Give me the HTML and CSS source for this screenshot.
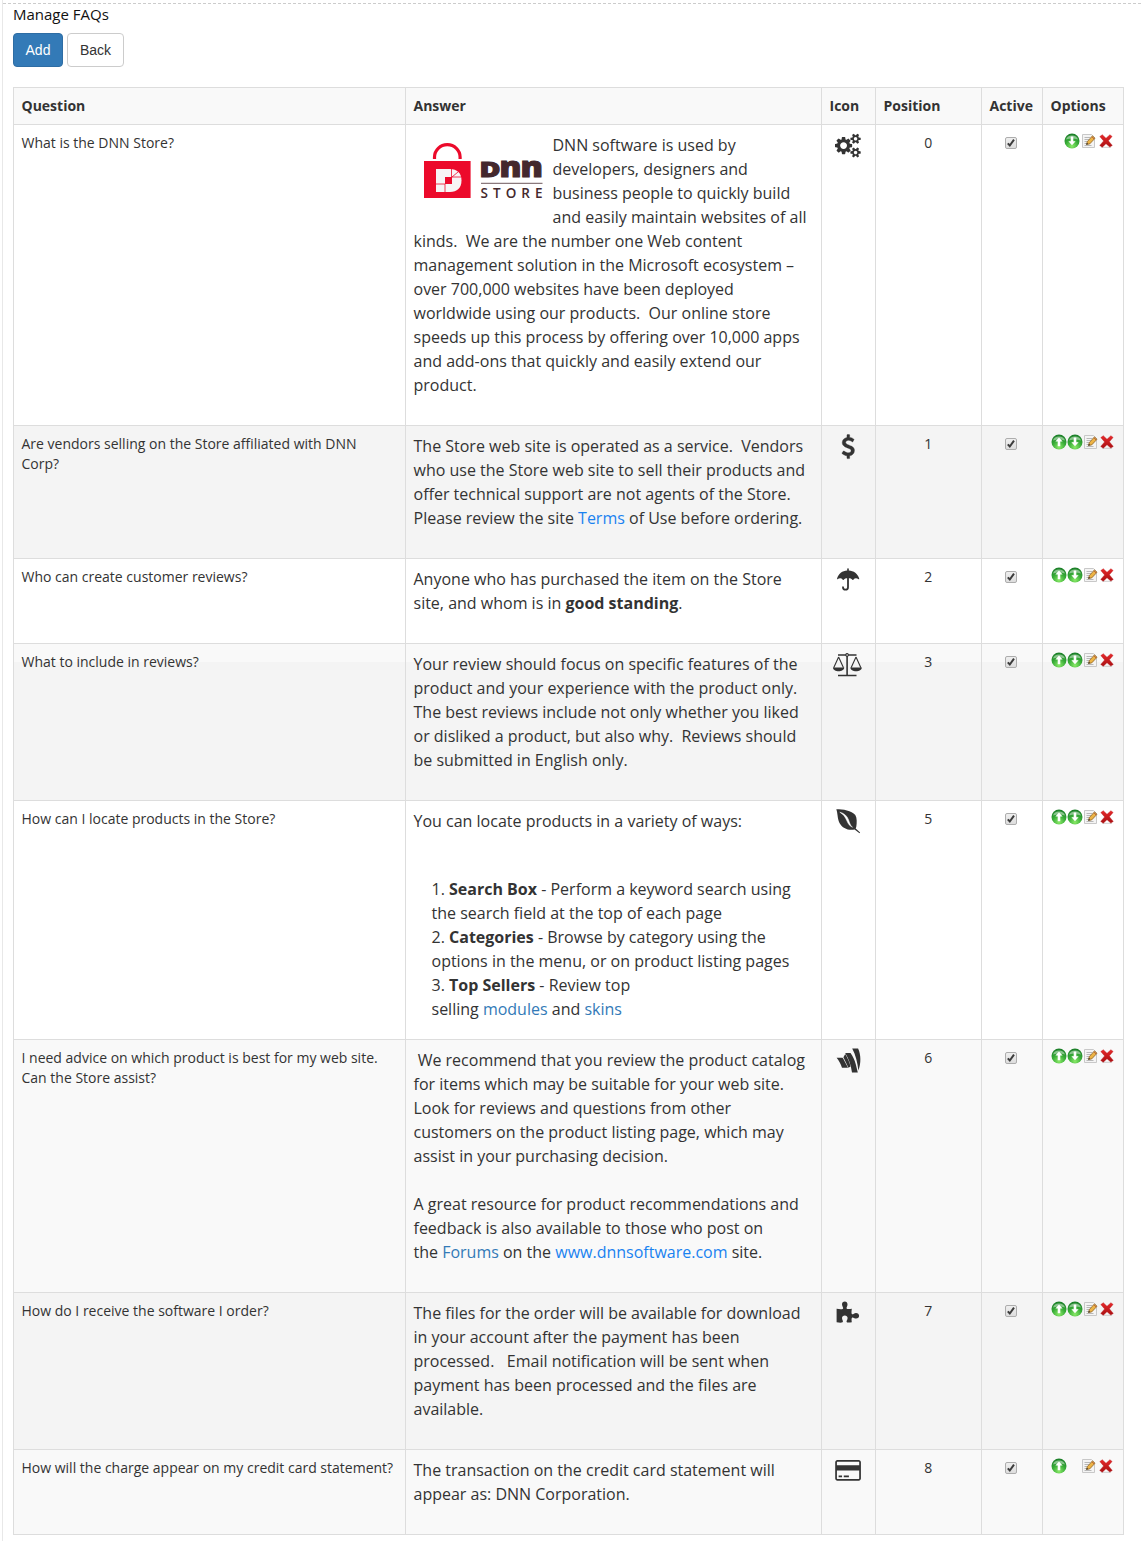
FILE: index.html
```html
<!DOCTYPE html>
<html lang="en">
<head>
<meta charset="utf-8">
<title>Manage FAQs</title>
<link rel="stylesheet" href="styles.css">
</head>
<body>
<svg class="defs" aria-hidden="true">
  <defs>
    <radialGradient id="green" cx=".5" cy=".85" r=".8"><stop offset="0" stop-color="#8aea68"/><stop offset=".55" stop-color="#37ab37"/><stop offset="1" stop-color="#1c8029"/></radialGradient>
    <linearGradient id="red" x1="0" y1="0" x2="0" y2="1"><stop offset="0" stop-color="#e8292b"/><stop offset="1" stop-color="#a80f12"/></linearGradient>
    <linearGradient id="box" x1="0" y1="0" x2="0" y2="1"><stop offset="0" stop-color="#f0f0f0"/><stop offset="1" stop-color="#dcdcdc"/></linearGradient>
    <symbol id="up" viewBox="0 0 16 16"><circle cx="8" cy="8" r="7.500" fill="url(#green)"/><path d="M2 6.500a6.200 5.500 0 0 1 12 0Q8 4.600 2 6.500z" fill="#fff" opacity=".45"/><path d="M8 3.600l3.600 4H9.300v4.700H6.700V7.600H4.400z" fill="#fff"/></symbol>
    <symbol id="down" viewBox="0 0 16 16"><circle cx="8" cy="8" r="7.500" fill="url(#green)"/><path d="M2 6.500a6.200 5.500 0 0 1 12 0Q8 4.600 2 6.500z" fill="#fff" opacity=".45"/><path d="M8 12.300l3.600-4H9.300V3.600H6.700v4.700H4.400z" fill="#fff"/></symbol>
    <symbol id="edit" viewBox="0 0 16 16"><path d="M1.500 1.500h9l3 3v10h-12z" fill="#f4f4f4" stroke="#c8c8c8"/><path d="M3.500 4.500h6M3.500 6.500h5M3.500 8.500h4M3.500 10.500h2.500M3.500 12.500h7" stroke="#b8b8b8"/><path d="M5.500 11.500L6.400 8.500 11.500 2.900 14 5.300 8.700 10.900z" fill="#edb445" stroke="#8e6326" stroke-width=".8"/><path d="M11 3.800l2.200 2.200" stroke="#b95a35"/><path d="M5.200 11.800l.7-2 1.300 1.300z" fill="#333"/></symbol>
    <symbol id="delete" viewBox="0 0 16 16"><path d="M3 14.300h10" stroke="#bbb" opacity=".7"/><path d="M1.800 3.600L4.300 1.700 8 5.300 11.900 1.700l2.200 1.700L10.400 7.800l3.900 4.600-2.500 1.700L8 10.700l-3.700 3.500-2.600-1.800L5.600 7.900z" fill="url(#red)" stroke="#b51c1f" stroke-width=".4"/></symbol>
    <symbol id="check" viewBox="0 0 12 12"><rect x=".5" y=".5" width="11" height="11" rx="1.500" fill="url(#box)" stroke="#adadad"/><path d="M2.800 6.300l2 2.200 4.200-5.800" fill="none" stroke="#3c3c3c" stroke-width="2"/></symbol>
  </defs>
</svg>
<main class="module">
  <h1 class="title">Manage FAQs</h1>
  <div class="actions"><button class="btn btn-primary">Add</button><button class="btn btn-back">Back</button></div>
  <table class="faq">
    <colgroup><col class="c-question"><col class="c-answer"><col class="c-icon"><col class="c-position"><col class="c-active"><col class="c-options"></colgroup>
    <thead><tr><th>Question</th><th>Answer</th><th>Icon</th><th>Position</th><th>Active</th><th>Options</th></tr></thead>
    <tbody>
      <tr>
        <td>What is the DNN Store?</td>
        <td class="answer">
          <svg class="logo" viewBox="0 0 119 56">
            <path d="M10.500 16v-2a12.800 12.300 0 0 1 25.600 0v2" fill="none" stroke="#ec0a2b" stroke-width="3.200"/>
            <rect x="0" y="18" width="46.600" height="37" fill="#ec0a2b"/>
            <path d="M12 26h14c7 0 11.500 4 11.500 11.500S33 49 26 49H12z" fill="#f7f4f5"/>
            <path d="M21 34h7v7h-7z" fill="#ec0a2b"/><path d="M27.500 26v8M28 34h9M28 34l6-5M21 41v8M12 41h9" stroke="#ec0a2b" stroke-width=".8" fill="none"/>
            <g class="wordmark"><text x="55.500" y="34" font-size="21.500" textLength="21" lengthAdjust="spacingAndGlyphs">D</text><text x="75.500" y="34" font-size="28" textLength="22" lengthAdjust="spacingAndGlyphs">n</text><text x="96.500" y="34" font-size="28" textLength="22.500" lengthAdjust="spacingAndGlyphs">n</text></g>
            <path d="M57 40.300h61.500" stroke="#6d585c"/>
            <text class="store" x="56.500" y="54.500" textLength="62" lengthAdjust="spacing">STORE</text>
          </svg>DNN software is used by<br>developers, designers and<br>business people to quickly build<br>and easily maintain websites of all<br>kinds.&nbsp; We are the number one Web content<br>management solution in the Microsoft ecosystem –<br>over 700,000 websites have been deployed<br>worldwide using our products.&nbsp; Our online store<br>speeds up this process by offering over 10,000 apps<br>and add-ons that quickly and easily extend our<br>product.</td>
        <td><svg class="icon" viewBox="0 0 30 26"><path transform="translate(2 .6) scale(.01339)" d="M896 896q0-106-75-181t-181-75-181 75-75 181 75 181 181 75 181-75 75-181zm768 512q0-52-38-90t-90-38-90 38-38 90q0 53 37.500 90.500t90.500 37.500 90.500-37.500 37.500-90.500zm0-1024q0-52-38-90t-90-38-90 38-38 90q0 53 37.500 90.500t90.500 37.500 90.500-37.500 37.500-90.500zm-384 421v185q0 10-7 19.500t-16 10.500l-155 24q-11 35-32 76 34 48 90 115 7 11 7 20 0 12-7 19-23 30-82.500 89.500t-78.500 59.500q-11 0-21-7l-115-90q-37 19-77 31-11 108-23 155-7 24-30 24h-186q-11 0-20-7.500t-10-17.500l-23-153q-34-10-75-31l-118 89q-7 7-20 7-11 0-21-8-144-133-144-160 0-9 7-19 10-14 41-53t47-61q-23-44-35-82l-152-24q-10-1-17-9.500t-7-19.500v-185q0-10 7-19.500t16-10.500l155-24q11-35 32-76-34-48-90-115-7-11-7-20 0-12 7-20 22-30 82-89t79-59q11 0 21 7l115 90q34-18 77-32 11-108 23-154 7-24 30-24h186q11 0 20 7.500t10 17.500l23 153q34 10 75 31l118-89q8-7 20-7 11 0 21 8 144 133 144 160 0 8-7 19-12 16-42 54t-45 60q23 48 34 82l152 23q10 2 17 10.500t7 19.500zm640 533v140q0 16-149 31-12 27-30 52 51 113 51 138 0 4-4 7-122 71-124 71-8 0-46-47t-52-68q-20 2-30 2t-30-2q-14 21-52 68t-46 47q-2 0-124-71-4-3-4-7 0-25 51-138-18-25-30-52-149-15-149-31v-140q0-16 149-31 13-29 30-52-51-113-51-138 0-4 4-7 4-2 35-20t59-34 30-16q8 0 46 46.500t52 67.500q20-2 30-2t30 2q51-71 92-112l6-2q4 0 124 70 4 3 4 7 0 25-51 138 17 23 30 52 149 15 149 31zm0-1024v140q0 16-149 31-12 27-30 52 51 113 51 138 0 4-4 7-122 71-124 71-8 0-46-47t-52-68q-20 2-30 2t-30-2q-14 21-52 68t-46 47q-2 0-124-71-4-3-4-7 0-25 51-138-18-25-30-52-149-15-149-31v-140q0-16 149-31 13-29 30-52-51-113-51-138 0-4 4-7 4-2 35-20t59-34 30-16q8 0 46 46.500t52 67.500q20-2 30-2t30 2q51-71 92-112l6-2q4 0 124 70 4 3 4 7 0 25-51 138 17 23 30 52 149 15 149 31z"/></svg></td>
        <td class="position">0</td><td><svg class="check"><use href="#check"/></svg></td>
        <td><div class="options no-up"><svg><use href="#down"/></svg><svg><use href="#edit"/></svg><svg><use href="#delete"/></svg></div></td>
      </tr>
      <tr class="dark">
        <td>Are vendors selling on the Store affiliated with DNN<br>Corp?</td>
        <td class="answer">The Store web site is operated as a service.&nbsp; Vendors<br>who use the Store web site to sell their products and<br>offer technical support are not agents of the Store.<br>Please review the site <a class="bright">Terms</a> of Use before ordering.</td>
        <td><svg class="icon" viewBox="0 0 30 26"><path stroke="#333" stroke-width="30" transform="translate(3.200 .6) scale(.01339)" d="M1362 1185q0 153-99.500 263.500t-258.500 136.500v175q0 14-9 23t-23 9h-135q-13 0-22.500-9.500t-9.500-22.500v-175q-66-9-127.500-31t-101.500-44.500-74-48-46.500-37.500-17.500-18q-17-21-2-41l103-135q7-10 23-12 15-2 24 9l2 2q113 99 243 125 37 8 74 8 81 0 142.500-43t61.500-122q0-28-15-53t-33.500-42-58.500-37.500-66-32-80-32.500q-39-16-61.500-25t-61.500-26.500-62.500-31-56.500-35.500-53.500-42.500-43.500-49-35.500-58-21-66.500-8.500-78q0-138 98-242t255-134v-180q0-13 9.500-22.500t22.500-9.500h135q14 0 23 9t9 23v176q57 6 110.500 23t87 33.500 63.500 37.500 39 29 15 14q17 18 5 38l-81 146q-8 15-23 16-14 3-27-7-3-3-14.500-12t-39-26.500-58.500-32-74.500-26-85.500-11.500q-95 0-155 43t-60 111q0 26 8.500 48t29.500 41.500 39.500 33 56 31 60.500 27 70 27.500q53 20 81 31.500t76 35 75.500 42.500 62 50 53 63.500 31.500 76.500 13 94z"/></svg></td>
        <td class="position">1</td><td><svg class="check"><use href="#check"/></svg></td>
        <td><div class="options"><svg><use href="#up"/></svg><svg><use href="#down"/></svg><svg><use href="#edit"/></svg><svg><use href="#delete"/></svg></div></td>
      </tr>
      <tr>
        <td>Who can create customer reviews?</td>
        <td class="answer">Anyone who has purchased the item on the Store<br>site, and whom is in <b>good standing</b>.</td>
        <td><svg class="icon" viewBox="0 0 30 26"><path d="M4 12C5.200 6.800 9.500 3.800 14.200 3.600V2.100a.8.800 0 0 1 1.600 0v1.500c4.700.2 9.200 3.200 10.500 8.400-.3.300-.7.200-1 0-1.900-1.200-3.600-1-5 .7-.3.300-.6.300-.9 0-1.100-1.200-2.200-1.500-3.500-1.500v9a2.900 2.900 0 0 1-6.800 0c0-1.200 1.700-1.200 1.800 0a1.600 1.600 0 0 0 3.200 0v-9c-1.300 0-2.300.3-3.400 1.500-.3.300-.6.300-.9 0-1.400-1.700-3.100-1.900-5-.7-.4.200-.7.300-.9 0z"/></svg></td>
        <td class="position">2</td><td><svg class="check"><use href="#check"/></svg></td>
        <td><div class="options"><svg><use href="#up"/></svg><svg><use href="#down"/></svg><svg><use href="#edit"/></svg><svg><use href="#delete"/></svg></div></td>
      </tr>
      <tr class="split">
        <td>What to include in reviews?</td>
        <td class="answer">Your review should focus on specific features of the<br>product and your experience with the product only.<br>The best reviews include not only whether you liked<br>or disliked a product, but also why.&nbsp; Reviews should<br>be submitted in English only.</td>
        <td><svg class="icon" viewBox="0 0 30 26"><path d="M5 2.200h7.300a1.900 1.900 0 0 1 3.500 0H23.500v1.500h-7.700L14.900 4.700v18h8.600v1.500H5v-1.500h8.300v-18l-1-1H5z"/><circle cx="14.100" cy="3" r=".8" fill="#f9f9f9"/><path d="M5.600 5L.7 15.800M5.600 5l4.900 10.800M23 5l-4.900 10.800M23 5l4.900 10.800" stroke="#333" stroke-width="1.100"/><path d="M0 15.500h11.200c0 5-11.200 5-11.200 0zM17.400 15.500h11.400c0 5-11.400 5-11.400 0z"/></svg></td>
        <td class="position">3</td><td><svg class="check"><use href="#check"/></svg></td>
        <td><div class="options"><svg><use href="#up"/></svg><svg><use href="#down"/></svg><svg><use href="#edit"/></svg><svg><use href="#delete"/></svg></div></td>
      </tr>
      <tr>
        <td>How can I locate products in the Store?</td>
        <td class="answer"><p class="intro">You can locate products in a variety of ways:</p>
          <div class="ways">1. <b>Search Box</b> - Perform a keyword search using<br>the search field at the top of each page<br>2. <b>Categories</b> - Browse by category using the<br>options in the menu, or on product listing pages<br>3. <b>Top Sellers</b> - Review top<br>selling <a>modules</a> and <a>skins</a></div></td>
        <td><svg class="icon" viewBox="0 0 30 26"><path d="M3.300.2C10 .2 18.500 1.300 22.300 6c1.800 3.200 1.600 7.600 1 11.800l-.6 1.600 4.400 4.200-.6.700-4.900-3.800C15.500 21.800 9.500 19.500 6.500 14 4.400 9.500 4.700 3.800 3.300.2z"/><path d="M6.800 3.200C11 4.200 14.300 7 15.600 11c1 3 1.900 5.700 3.900 7.300-2.900-1.300-4.400-3.500-5.600-6.500C12.300 7.900 10.300 5.200 6.800 3.200z" fill="#fff" stroke="#fff" stroke-width=".5"/></svg></td>
        <td class="position">5</td><td><svg class="check"><use href="#check"/></svg></td>
        <td><div class="options"><svg><use href="#up"/></svg><svg><use href="#down"/></svg><svg><use href="#edit"/></svg><svg><use href="#delete"/></svg></div></td>
      </tr>
      <tr class="light">
        <td>I need advice on which product is best for my web site.<br>Can the Store assist?</td>
        <td class="answer">&nbsp;We recommend that you review the product catalog<br>for items which may be suitable for your web site.<br>Look for reviews and questions from other<br>customers on the product listing page, which may<br>assist in your purchasing decision.<br><br>A great resource for product recommendations and<br>feedback is also available to those who post on<br>the <a>Forums</a> on the <a class="bright">www.dnnsoftware.com</a> site.</td>
        <td><svg class="icon" viewBox="0 0 30 26"><path d="M3.600 9.700h5.200c.8 0 1.200.4 1.500 1.100l4.700 9H9c-1.200-3.700-3-7.200-5.400-10.100z"/><path d="M12.200 5h5.300c2.300 3 4.200 7 5.200 11l2.100 8.500h-5.800C18 17.500 15.800 10.500 12.200 5z"/><path d="M19.200.4h5.900c3 6.800 3 14.600.3 22.100C24.500 14.500 22.700 7 19.200.4z"/><path d="M10.400 9.200l1.900-3.100c2.300 3.800 4.100 7.900 5.200 12.400l-2.100 1.300z"/></svg></td>
        <td class="position">6</td><td><svg class="check"><use href="#check"/></svg></td>
        <td><div class="options"><svg><use href="#up"/></svg><svg><use href="#down"/></svg><svg><use href="#edit"/></svg><svg><use href="#delete"/></svg></div></td>
      </tr>
      <tr class="dark">
        <td>How do I receive the software I order?</td>
        <td class="answer">The files for the order will be available for download<br>in your account after the payment has been<br>processed.&nbsp;&nbsp; Email notification will be sent when<br>payment has been processed and the files are<br>available.</td>
        <td><svg class="icon" viewBox="0 0 30 26"><path d="M3.600 7.800c2.600.4 5.300.8 6.400-.1.800-.8-1-2.300-1-4.200C9 1.500 10.200.6 11.800.6s2.700 1.100 2.700 2.900c0 1.800-1.300 3-.9 3.900.6 1.200 3.300.5 5.200.3-.2 2.100-.7 5 .3 5.600 1 .4 1.900-1.300 3.900-1.300 1.800 0 3.100 1.100 3.100 2.800s-1.200 2.800-3 2.800c-1.900 0-2.900-1.500-3.800-1.100-1.100.5-.7 2.900-.5 4.700-1.900.2-4.600.8-5.200-.3-.4-.9 1-2 1-3.800 0-1.700-1.200-2.700-2.800-2.700s-2.800 1-2.800 2.700c0 1.800 1.400 3 .8 3.900-.8 1-3.600.7-6.200.2z"/></svg></td>
        <td class="position">7</td><td><svg class="check"><use href="#check"/></svg></td>
        <td><div class="options"><svg><use href="#up"/></svg><svg><use href="#down"/></svg><svg><use href="#edit"/></svg><svg><use href="#delete"/></svg></div></td>
      </tr>
      <tr class="light">
        <td>How will the charge appear on my credit card statement?</td>
        <td class="answer">The transaction on the credit card statement will<br>appear as: DNN Corporation.</td>
        <td><svg class="icon" viewBox="0 0 30 26"><path transform="translate(2.200 .4) scale(.01339)" d="M1760 128q66 0 113 47t47 113v1216q0 66-47 113t-113 47h-1600q-66 0-113-47t-47-113v-1216q0-66 47-113t113-47h1600zm-1600 128q-13 0-22.500 9.500t-9.500 22.500v224h1664v-224q0-13-9.500-22.500t-22.500-9.500h-1600zm1600 1280q13 0 22.500-9.500t9.500-22.500v-608h-1664v608q0 13 9.500 22.500t22.500 9.500h1600zm-1504-128v-128h256v128h-256zm384 0v-128h384v128h-384z"/></svg></td>
        <td class="position">8</td><td><svg class="check"><use href="#check"/></svg></td>
        <td><div class="options no-down"><svg><use href="#up"/></svg><svg><use href="#edit"/></svg><svg><use href="#delete"/></svg></div></td>
      </tr>
    </tbody>
  </table>
</main>
</body>
</html>
```
FILE: styles.css
```css
* { box-sizing: border-box; }
html { background: #fff; }
body { margin: 0 0 0 2px; height: 1541px; border-left: 1px solid #e8e8e8; padding-top: 3px; overflow: hidden; font: 14px/20px "Open Sans", sans-serif; color: #333; }
.defs { display: block; width: 0; height: 0; }
.module { border-top: 1px dashed #ccc; padding-left: 10px; }
.title { margin: 0; font-size: 15px; line-height: 20px; font-weight: 400; color: #111; }
.actions { display: flex; gap: 4px; margin: 9px 0 20px; }
.btn { height: 34px; padding: 0; border: 1px solid #ccc; border-radius: 4px; background: #fff; color: #333; font: 14px/20px "Liberation Sans", Arial, sans-serif; }
.btn-primary { width: 50px; background: #337ab7; border-color: #2e6da4; color: #fff; }
.btn-back { width: 57px; }
.faq { width: 1111px; table-layout: fixed; border-collapse: separate; border-spacing: 0; border: solid #ddd; border-width: 1px 0 0 1px; white-space: nowrap; }
.c-question { width: 392px; }
.c-answer { width: 416px; }
.c-icon { width: 54px; }
.c-position { width: 106px; }
.c-active { width: 61px; }
.c-options { width: 81px; }
.faq th, .faq td { padding: 8px 8px 8px 7.500px; border: solid #ddd; border-width: 0 1px 1px 0; text-align: left; vertical-align: top; }
.faq th { background: #f9f9f9; font-weight: 700; }
.faq td.answer { padding-bottom: 28px; font-size: 16px; line-height: 24px; }
.faq td.position { text-align: center; }
.light td { background: #f9f9f9; }
.dark td { background: #f4f4f4; }
.split td { background: linear-gradient(#f9f9f9 18px, #f4f4f4 18px); }
.logo { float: left; width: 119px; height: 56px; margin: 10px; overflow: visible; }
.wordmark { fill: #44282d; font-weight: 800; stroke: #44282d; stroke-width: 1; }
.store { fill: #44282d; font-size: 13.500px; font-weight: 600; }
.answer a { color: #337ab7; }
.answer a.bright { color: #1a82f0; }
.intro { margin: 0 0 44px; }
.ways { padding-left: 18px; margin-bottom: -10px; }
.icon { display: block; width: 30px; height: 26px; margin-left: 3.500px; fill: #333; }
.check { display: block; width: 12px; height: 12px; margin: 4px 0 0 15.500px; }
.options { display: flex; margin-left: .5px; }
.options svg { flex: none; width: 16px; height: 16px; }
.no-up { gap: 1px; padding-left: 13px; }
.no-down { gap: 1px; }
.no-down svg:first-child { margin-right: 13px; }
```
